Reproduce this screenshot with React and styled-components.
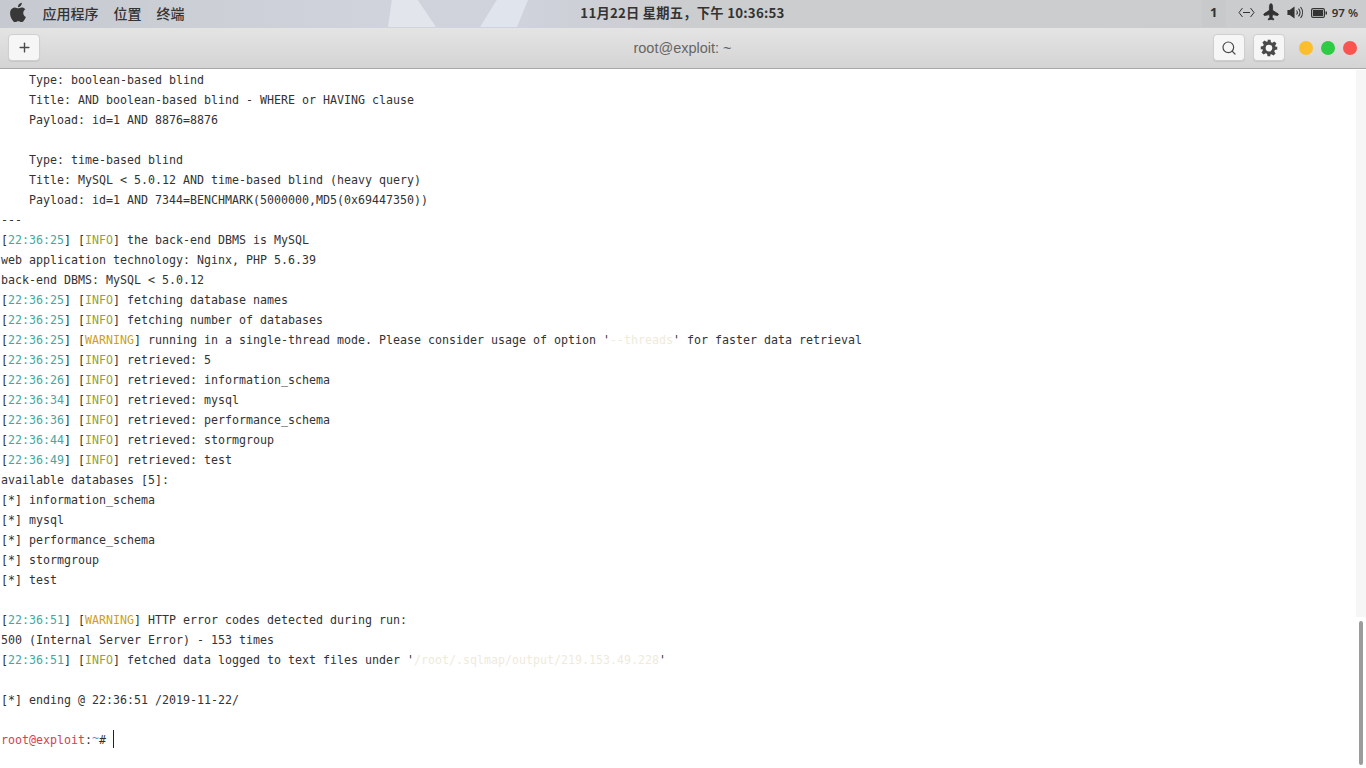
import React from 'react'
import styled, { createGlobalStyle } from 'styled-components'
import { Search, Plus, Plane } from 'lucide-react'

const GlobalStyle = createGlobalStyle`
  html, body {
    margin: 0;
    height: 100%;
    overflow: hidden;
    background: #fff;
  }
  * {
    box-sizing: border-box;
  }
`

const Screen = styled.div`
  width: 1366px;
  height: 768px;
  display: flex;
  flex-direction: column;
  overflow: hidden;
  font-family: "Noto Sans CJK SC", "Noto Sans", sans-serif;
`

const MenuBar = styled.div`
  position: relative;
  height: 28px;
  flex: none;
  display: flex;
  align-items: center;
  justify-content: space-between;
  padding: 0 8px 3px 10px;
  color: #2c2c2c;
  background: linear-gradient(90deg, #c6cad0 0, #d0d3db 28%, #d0d2dc 38%, #ced0d8 42%, #cccdcf 50%, #cbcccd 100%);

  /* wallpaper streaks showing through the translucent bar */
  &::before,
  &::after {
    content: '';
    position: absolute;
    top: 0;
    bottom: 1px;
    background: #e3e5ec;
  }
  &::before {
    left: 388px;
    width: 48px;
    clip-path: polygon(8% 0, 62% 0, 100% 100%, 0 100%);
  }
  &::after {
    left: 480px;
    width: 48px;
    background: #dfe4ed;
    clip-path: polygon(35% 0, 100% 0, 77% 100%, 0 100%);
  }
`

const MenuLeft = styled.div`
  display: flex;
  align-items: center;
  width: 400px;
  position: relative;
  z-index: 1;
`

const AppleMark = styled.svg`
  width: 17px;
  height: 21px;
  margin-right: 15.5px;
  margin-left: 0;
  fill: #383838;
`

const MenuItem = styled.span`
  font-size: 14px;
  margin-right: 15px;
  font-weight: 500;
  color: #333;
`

const Clock = styled.div`
  position: relative;
  z-index: 1;
  margin-right: 3px;
  font-size: 13.25px;
  font-weight: 700;
  letter-spacing: 0.25px;
  color: #333;
`

const Tray = styled.div`
  position: relative;
  z-index: 1;
  width: 400px;
  display: flex;
  align-items: center;
  justify-content: flex-end;
  color: #333;
`

const Workspace = styled.span`
  font-family: "Noto Sans", sans-serif;
  font-size: 13px;
  font-weight: 700;
  background: #c8c9cb;
  width: 24px;
  height: 28px;
  line-height: 27px;
  margin-top: -3px;
  margin-bottom: -3px;
  text-align: center;
  margin-right: 12px;
`

const TrayIcon = styled.svg`
  flex: none;
  margin-right: ${p => p.$gap}px;
`

const Percent = styled.span`
  font-family: "Noto Sans", sans-serif;
  font-size: 11.5px;
  font-weight: 600;
`

const TitleBar = styled.div`
  height: 41px;
  flex: none;
  display: grid;
  grid-template-columns: 1fr auto 1fr;
  align-items: center;
  padding: 0 9px 1px 8px;
  background: linear-gradient(180deg, #e4e4e4, #d4d4d4);
  border-bottom: 1px solid #a9a9a9;
`

const ToolButton = styled.div`
  width: 32px;
  height: 27px;
  display: flex;
  align-items: center;
  justify-content: center;
  border-radius: 4px;
  background: #f6f6f6;
  border: 1px solid #cfcfcf;
  box-shadow: 0 1px 1px rgba(0, 0, 0, 0.08);
  color: #4a4a4a;
`

const Title = styled.div`
  font-family: "Liberation Sans", sans-serif;
  font-size: 14.5px;
  color: #666;
`

const TitleRight = styled.div`
  display: flex;
  align-items: center;
  justify-content: flex-end;
  gap: 8px;
`

const Dots = styled.div`
  display: flex;
  gap: 8px;
  margin-left: 6px;
`

const Dot = styled.span`
  width: 14px;
  height: 14px;
  border-radius: 50%;
  background: ${p => p.$color};
`

const Terminal = styled.div`
  flex: 1;
  min-height: 0;
  position: relative;
  background: #fff;
  padding: 1px 0 0 1px;
  overflow: hidden;
`

const Line = styled.div`
  height: 20px;
  line-height: 20px;
  white-space: pre;
  font-family: "DejaVu Sans Mono", monospace;
  font-size: 11.63px;
  color: #333;
`

const Time = styled.span`
  color: #44a89f;
`

const Level = styled.span`
  color: ${p => (p.$warn ? '#cb9f22' : '#98a22a')};
`

const Faint = styled.span`
  color: #efeadb;
`

const Prompt = styled.span`
  color: #d9404f;
`

const Tilde = styled.span`
  color: #4a9ad0;
  position: relative;
  top: -2px;
`

const Caret = styled.span`
  display: inline-block;
  width: 1px;
  height: 18px;
  vertical-align: -4px;
  background: #222;
`

const Track = styled.div`
  position: absolute;
  top: 1px;
  right: 0;
  width: 10px;
  height: 547px;
  background: #f6f6f6;
`

const Thumb = styled.div`
  position: absolute;
  right: 3px;
  top: 552px;
  width: 4px;
  height: 144px;
  border-radius: 2px;
  background: #9c9c9c;
`

const Tag = ({ time, warn }) => (
  <>
    [<Time>{time}</Time>] [<Level $warn={warn}>{warn ? 'WARNING' : 'INFO'}</Level>]
  </>
)

export default function App() {
  return (
    <Screen>
      <GlobalStyle />
      <MenuBar>
        <MenuLeft>
          <AppleMark viewBox="3 1 18 22">
            <path d="M17.05 12.54c-.03-2.6 2.12-3.85 2.22-3.91-1.21-1.77-3.09-2.01-3.76-2.04-1.6-.16-3.12.94-3.93.94-.81 0-2.06-.92-3.39-.89-1.74.03-3.35 1.01-4.25 2.57-1.81 3.14-.46 7.79 1.3 10.34.86 1.25 1.89 2.65 3.24 2.6 1.3-.05 1.79-.84 3.36-.84 1.57 0 2.01.84 3.39.81 1.4-.02 2.28-1.27 3.13-2.53.99-1.45 1.4-2.86 1.42-2.93-.03-.01-2.72-1.04-2.73-4.12zM14.47 4.9c.72-.87 1.2-2.08 1.07-3.28-1.03.04-2.28.69-3.02 1.55-.66.77-1.24 2-1.09 3.18 1.15.09 2.32-.58 3.04-1.45z" />
          </AppleMark>
          <MenuItem>应用程序</MenuItem>
          <MenuItem>位置</MenuItem>
          <MenuItem>终端</MenuItem>
        </MenuLeft>
        <Clock>11月22日 星期五，下午 10:36:53</Clock>
        <Tray>
          <Workspace>1</Workspace>
          <TrayIcon $gap={7} width="17" height="11" viewBox="0 0 17 11" fill="none" stroke="#333" strokeWidth="1">
            <path d="M4.500 1 1 5.500 4.500 10M12.500 1 16 5.500 12.500 10M5 5.500h7" />
          </TrayIcon>
          <TrayIcon as={Plane} $gap={7} size={18} fill="#333" strokeWidth={1} style={{ transform: 'rotate(-45deg)' }} />
          <TrayIcon $gap={7} width="17" height="15" viewBox="0 0 17 14" fill="none" stroke="#333" strokeWidth="1.1">
            <path d="M1 5h2l4-3v10L3 9H1z" fill="#333" />
            <path d="M9.500 5a3 3 0 0 1 0 4M11.500 3.200a6 6 0 0 1 0 7.600M13.600 1.500a9 9 0 0 1 0 11" />
          </TrayIcon>
          <TrayIcon $gap={5} width="16" height="10" viewBox="0 0 16 10" fill="none">
            <rect x="0.600" y="0.600" width="12.800" height="8.800" rx="1.500" stroke="#333" strokeWidth="1.200" />
            <rect x="2" y="2" width="10" height="6" fill="#333" />
            <rect x="14.500" y="3.500" width="1.500" height="3" fill="#333" />
          </TrayIcon>
          <Percent>97 %</Percent>
        </Tray>
      </MenuBar>
      <TitleBar>
        <div>
          <ToolButton>
            <Plus size={15} strokeWidth={2.2} />
          </ToolButton>
        </div>
        <Title>root@exploit: ~</Title>
        <TitleRight>
          <ToolButton>
            <Search size={16} strokeWidth={1.8} />
          </ToolButton>
          <ToolButton>
            <svg width="18" height="18" viewBox="0 0 24 24" fill="#4a4a4a">
              <path fillRule="evenodd" d="M10 1h4l.6 3.2 1.9.8 2.7-1.8 2.8 2.8-1.8 2.7.8 1.9L23 10v4l-3.2.6-.8 1.9 1.8 2.7-2.8 2.8-2.700-1.800-1.900.8L14 23h-4l-.6-3.200-1.900-.8-2.700 1.800L2 18l1.800-2.700-.8-1.900L1 14v-4l3.200-.6.8-1.900L3.200 4.800 6 2l2.700 1.800 1.900-.8L10 1zm2 6.500a4.500 4.500 0 1 0 0 9 4.500 4.500 0 0 0 0-9z" />
            </svg>
          </ToolButton>
          <Dots>
            <Dot $color="#fbbf2e" />
            <Dot $color="#2ecb45" />
            <Dot $color="#fa5451" />
          </Dots>
        </TitleRight>
      </TitleBar>
      <Terminal>
        <Track />
        <Line>{'    Type: boolean-based blind'}</Line>
        <Line>{'    Title: AND boolean-based blind - WHERE or HAVING clause'}</Line>
        <Line>{'    Payload: id=1 AND 8876=8876'}</Line>
        <Line> </Line>
        <Line>{'    Type: time-based blind'}</Line>
        <Line>{'    Title: MySQL < 5.0.12 AND time-based blind (heavy query)'}</Line>
        <Line>{'    Payload: id=1 AND 7344=BENCHMARK(5000000,MD5(0x69447350))'}</Line>
        <Line>---</Line>
        <Line><Tag time="22:36:25" /> the back-end DBMS is MySQL</Line>
        <Line>web application technology: Nginx, PHP 5.6.39</Line>
        <Line>{'back-end DBMS: MySQL < 5.0.12'}</Line>
        <Line><Tag time="22:36:25" /> fetching database names</Line>
        <Line><Tag time="22:36:25" /> fetching number of databases</Line>
        <Line><Tag time="22:36:25" warn /> running in a single-thread mode. Please consider usage of option '<Faint>--threads</Faint>' for faster data retrieval</Line>
        <Line><Tag time="22:36:25" /> retrieved: 5</Line>
        <Line><Tag time="22:36:26" /> retrieved: information_schema</Line>
        <Line><Tag time="22:36:34" /> retrieved: mysql</Line>
        <Line><Tag time="22:36:36" /> retrieved: performance_schema</Line>
        <Line><Tag time="22:36:44" /> retrieved: stormgroup</Line>
        <Line><Tag time="22:36:49" /> retrieved: test</Line>
        <Line>available databases [5]:</Line>
        <Line>[*] information_schema</Line>
        <Line>[*] mysql</Line>
        <Line>[*] performance_schema</Line>
        <Line>[*] stormgroup</Line>
        <Line>[*] test</Line>
        <Line> </Line>
        <Line><Tag time="22:36:51" warn /> HTTP error codes detected during run:</Line>
        <Line>500 (Internal Server Error) - 153 times</Line>
        <Line><Tag time="22:36:51" /> fetched data logged to text files under '<Faint>/root/.sqlmap/output/219.153.49.228</Faint>'</Line>
        <Line> </Line>
        <Line>[*] ending @ 22:36:51 /2019-11-22/</Line>
        <Line> </Line>
        <Line><Prompt>root@exploit</Prompt>:<Tilde>~</Tilde># <Caret /></Line>
        <Thumb />
      </Terminal>
    </Screen>
  )
}
